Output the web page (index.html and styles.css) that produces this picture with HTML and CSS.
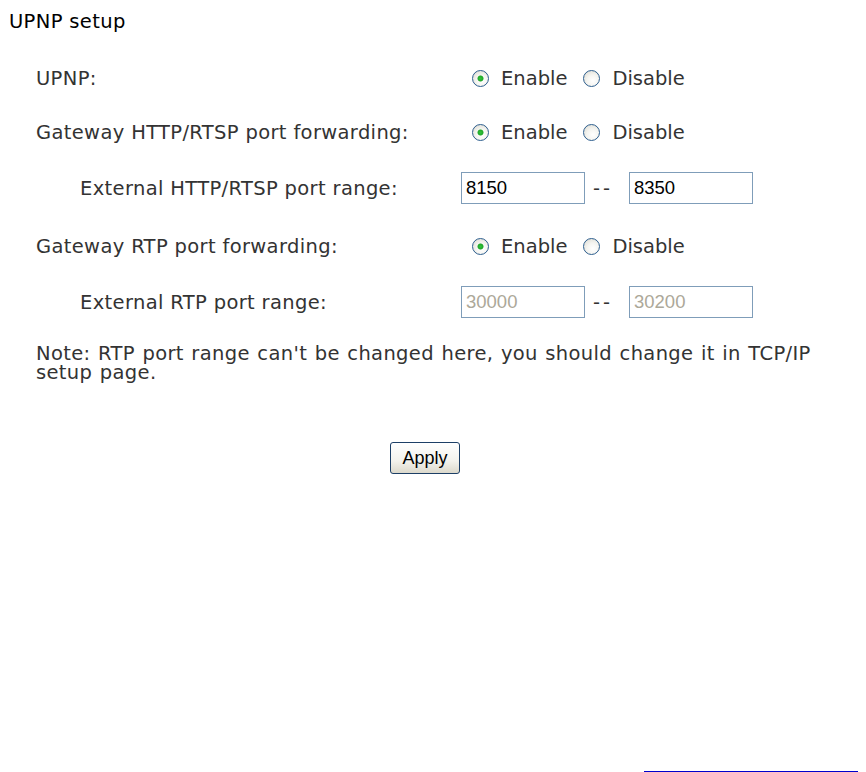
FILE: index.html
```html
<!DOCTYPE html>
<html>
<head>
<meta charset="utf-8">
<title>UPNP setup</title>
<link rel="stylesheet" href="styles.css">
</head>
<body>
<div class="page">
  <h1 class="title">UPNP setup</h1>
  <form class="form">
    <div class="row r54">
      <div class="label">UPNP:</div>
      <div class="value">
        <label class="opt"><input type="radio" name="upnp" class="radio" checked><span>Enable</span></label>
        <label class="opt"><input type="radio" name="upnp" class="radio"><span>Disable</span></label>
      </div>
    </div>
    <div class="row r54">
      <div class="label">Gateway HTTP/RTSP port forwarding:</div>
      <div class="value">
        <label class="opt"><input type="radio" name="http" class="radio" checked><span>Enable</span></label>
        <label class="opt"><input type="radio" name="http" class="radio"><span>Disable</span></label>
      </div>
    </div>
    <div class="row r58">
      <div class="label sub">External HTTP/RTSP port range:</div>
      <div class="value range">
        <input class="field" type="text" value="8150">
        <span class="dash">--</span>
        <input class="field" type="text" value="8350">
      </div>
    </div>
    <div class="row r58">
      <div class="label">Gateway RTP port forwarding:</div>
      <div class="value">
        <label class="opt"><input type="radio" name="rtp" class="radio" checked><span>Enable</span></label>
        <label class="opt"><input type="radio" name="rtp" class="radio"><span>Disable</span></label>
      </div>
    </div>
    <div class="row r54">
      <div class="label sub">External RTP port range:</div>
      <div class="value range">
        <input class="field" type="text" value="30000" disabled>
        <span class="dash">--</span>
        <input class="field" type="text" value="30200" disabled>
      </div>
    </div>
    <p class="note">Note: RTP port range can't be changed here, you should change it in TCP/IP setup page.</p>
    <div class="actions">
      <button type="button" class="btn">Apply</button>
    </div>
  </form>
  <div class="footer-line"></div>
</div>
</body>
</html>
```

FILE: styles.css
```css
html, body {
  margin: 0;
  padding: 0;
  background: #ffffff;
}
body {
  font-family: "DejaVu Sans", Verdana, sans-serif;
  font-size: 19.5px;
  letter-spacing: 0.35px;
  color: #333333;
  overflow: hidden;
}
.page {
  width: 866px;
  height: 772px;
  display: flex;
  flex-direction: column;
}
.title {
  margin: 0;
  padding-left: 9px;
  height: 44px;
  line-height: 44px;
  font-size: 19.5px;
  font-weight: normal;
  color: #000000;
}
.form {
  margin: 0 0 0 9px;
  width: 832px;
  padding-top: 7px;
}
.row {
  display: grid;
  grid-template-columns: 425px 1fr;
  align-items: center;
}
.r54 { height: 54px; }
.r58 { height: 58px; }
.label {
  padding-left: 27px;
  white-space: nowrap;
}
.label.sub {
  padding-left: 71px;
}
.value {
  display: flex;
  align-items: center;
  padding-left: 27px;
}
.opt {
  display: flex;
  align-items: center;
  margin-left: 11px;
}
.opt + .opt {
  margin-left: 16px;
}
.opt span {
  margin-left: 12px;
  letter-spacing: 0;
}
.radio {
  appearance: none;
  -webkit-appearance: none;
  margin: 0;
  width: 17px;
  height: 17px;
  border-radius: 50%;
  border: 1px solid #2d5e8e;
  box-sizing: border-box;
  background: radial-gradient(circle at 60% 65%, #ffffff 0%, #f4f4f0 45%, #d8d6cc 100%);
}
.radio:checked {
  background:
    radial-gradient(circle at 50% 50%, #31c43a 0, #20a82a 2.6px, transparent 3.4px),
    radial-gradient(circle at 60% 65%, #ffffff 0%, #f4f4f0 45%, #d8d6cc 100%);
}
.field {
  box-sizing: border-box;
  width: 124px;
  height: 32px;
  margin: 0;
  padding: 0 4px;
  border: 1px solid #7f9db9;
  font-family: "Liberation Sans", Arial, sans-serif;
  font-size: 18.5px;
  letter-spacing: 0;
  color: #000000;
  background: #ffffff;
  outline: none;
}
.field:disabled {
  color: #aca899;
  background: #ffffff;
}
.dash {
  width: 44px;
  box-sizing: border-box;
  padding-left: 8px;
  letter-spacing: 3px;
  color: #333333;
}
.note {
  margin: 15px 0 0 27px;
  width: 790px;
  line-height: 19px;
  word-spacing: 1px;
}
.actions {
  display: flex;
  justify-content: center;
  margin-top: 60px;
}
.btn {
  box-sizing: border-box;
  width: 70px;
  height: 32px;
  padding: 0;
  border: 1px solid #1d3f66;
  border-radius: 3px;
  background: linear-gradient(#ffffff, #f3f2ec 60%, #dcd9cc);
  font-family: "Liberation Sans", Arial, sans-serif;
  font-size: 18px;
  color: #000000;
}
.footer-line {
  margin: auto 0 0 644px;
  width: 214px;
  height: 1px;
  flex: none;
  background: #0000cc;
}
```
